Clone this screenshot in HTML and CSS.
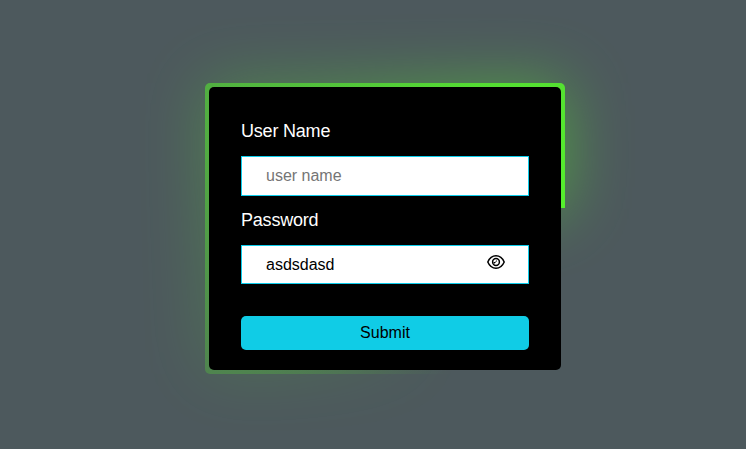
FILE: index.html
```html
<!DOCTYPE html>
<html lang="en">
<head>
<meta charset="utf-8">
<title>Login</title>
<link rel="stylesheet" href="styles.css">
</head>
<body>
<main class="card">
  <form class="form">
    <label class="label" for="user">User Name</label>
    <input class="input" id="user" type="text" placeholder="user name">
    <label class="label label-password" for="password">Password</label>
    <div class="password">
      <input class="input input-password" id="password" type="text" value="asdsdasd">
      <svg class="eye" viewBox="0 0 18 16" aria-hidden="true">
        <path d="M.8 8C2.500 4 5.500 1.750 9 1.750S15.500 4 17.200 8C15.500 12 12.500 14.250 9 14.250S2.500 12 .8 8Z" fill="none" stroke="#000" stroke-width="1.500" stroke-linejoin="round"/>
        <circle cx="9" cy="8" r="3.400" fill="none" stroke="#000" stroke-width="1.500"/>
        <path d="M9 5.500V6.700A1.300 1.300 0 0 1 7.700 8H6.500A2.500 2.500 0 0 0 7.200 9.800L8.300 8.700 9.800 7.300Z"/>
      </svg>
    </div>
    <button class="submit" type="button">Submit</button>
  </form>
</main>
</body>
</html>
```
FILE: styles.css
```css
* { box-sizing: border-box; }

body {
  margin: 0;
  height: 100vh;
  overflow: hidden;
  background: #4d595d;
  font-family: "Liberation Sans", Arial, sans-serif;
}

.card {
  position: relative;
  width: 352px;
  height: 283px;
  margin: 87px 0 0 209px;
}

.card::before,
.card::after {
  content: "";
  position: absolute;
  z-index: -1;
  inset: -4px;
  border-radius: 5px;
  background: conic-gradient(from 83.5deg, transparent 20%, #55f02c);
}

.card::before {
  filter: blur(32px);
  opacity: .5;
}

.form {
  display: flex;
  flex-direction: column;
  height: 100%;
  padding: 32px 32px 20px;
  border-radius: 5px;
  background: #000;
}

.label {
  height: 24px;
  margin-bottom: 13px;
  color: #fff;
  font-size: 18px;
  letter-spacing: -.2px;
  line-height: 24px;
}

.label-password { margin-top: 12px; }

.input {
  display: block;
  width: 100%;
  height: 40px;
  padding: 0 24px;
  border: 1px solid #0dcdec;
  border-radius: 0;
  outline: none;
  background: #fff;
  color: #000;
  font: 16px "Liberation Sans", Arial, sans-serif;
}

.input::placeholder { color: #757575; }

.password { position: relative; }

.input-password { height: 39px; }

.eye {
  position: absolute;
  top: 9px;
  right: 24px;
  width: 18px;
  height: 16px;
}

.submit {
  height: 34px;
  margin-top: auto;
  padding: 0;
  border: 0;
  border-radius: 5px;
  background: #10cce6;
  color: #000;
  font: 16px "Liberation Sans", Arial, sans-serif;
}
```
